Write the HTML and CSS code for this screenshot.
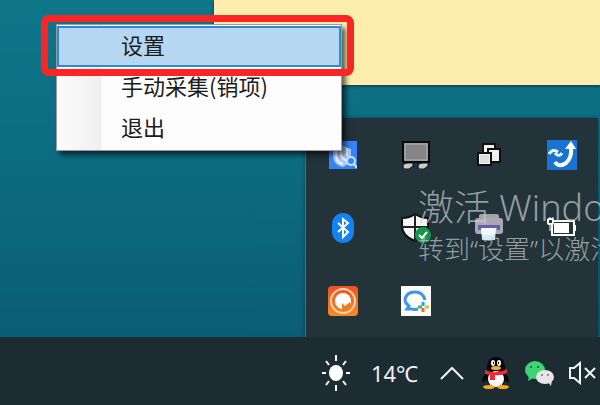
FILE: index.html
```
<!DOCTYPE html>
<html lang="zh-CN">
<head>
    <meta charset="UTF-8">
    <title>桌面</title>
    <link rel="stylesheet" href="styles.css">
</head>
<body>

<main class="desktop">
    <div class="note"></div>

    <div class="tray-panel">
        <button class="icon-button" aria-label="搜索">
            <svg width="28" height="28" viewBox="0 0 28 28">
                <rect width="28" height="28" fill="#3683f5"/>
                <path d="M4 8v8q1 8 10 10q7-3 8-9V8q-4-1-9-4q-4 3-9 4z" fill="#a9c9f9"/>
                <path d="M7 8v7q1 7 7 8M12 6v8q2 5 7 6M18 7v8" fill="none" stroke="#f2f8ff" stroke-width="2"/>
                <circle cx="22" cy="20" r="4" fill="#3683f5" stroke="#cfe3ff" stroke-width="2"/>
                <path d="M25 23l3 4" stroke="#dcebff" stroke-width="2"/>
            </svg>
        </button>
        <button class="icon-button" aria-label="显示器">
            <svg width="28" height="28" viewBox="0 0 28 28">
                <rect x="1" y="1" width="26" height="20" fill="#858585" stroke="#080b0c" stroke-width="2"/>
                <path d="M3 19V3h22v16z" fill="none" stroke="#b4b4b4"/>
                <path d="M1 26q0-4 5-4h5v3l-4 3H2zM16 26q0-4 5-4h5v3l-4 3h-5z" fill="#ccc" stroke="#111"/>
            </svg>
        </button>
        <button class="icon-button" aria-label="窗口">
            <svg width="28" height="28" viewBox="0 0 28 28">
                <g fill="#f1f1f1" stroke="#120f10" stroke-width="2">
                    <rect x="8" y="3" width="12" height="12"/>
                    <rect x="13" y="8" width="12" height="13"/>
                    <rect x="3" y="12" width="13" height="12"/>
                </g>
                <rect x="5" y="14" width="9" height="8" fill="#dcdcdc"/>
            </svg>
        </button>
        <button class="icon-button" aria-label="同步">
            <svg width="30" height="30" viewBox="0 0 30 30">
                <rect width="30" height="30" fill="#1874cf"/>
                <path d="M2 14q4-6 9-2M15 13q-3 5-7 0" fill="none" stroke="#e5f5ff" stroke-width="3"/>
                <path d="M8 22q4 6 11 1q6-5 5-15" fill="none" stroke="#fff" stroke-width="4"/>
                <path d="M18 9l6-8 5 8z" fill="#fff"/>
            </svg>
        </button>
        <button class="icon-button" aria-label="蓝牙">
            <svg width="24" height="30" viewBox="0 0 24 30">
                <rect x="1" width="22" height="30" rx="11" fill="#1382f2"/>
                <path d="M7 10l10 9-5 5V6l5 4-10 9" fill="none" stroke="#fff" stroke-width="2"/>
            </svg>
        </button>
        <button class="icon-button" aria-label="安全中心">
            <svg width="30" height="30" viewBox="0 0 30 30">
                <path d="M1 5q8 0 13-4q6 4 13 4v8q0 10-13 15Q1 23 1 13z" fill="#f7f7f7" stroke="#111" stroke-width="2"/>
                <path d="M14 1v27M1 14h26" stroke="#222" stroke-width="2"/>
                <circle cx="22" cy="22" r="8" fill="#14964a"/>
                <path d="M18 22l3 3 5-6" fill="none" stroke="#fff" stroke-width="2"/>
            </svg>
        </button>
        <button class="icon-button" aria-label="打印机">
            <svg width="30" height="30" viewBox="0 0 30 30">
                <rect x="5" y="1" width="20" height="8" rx="2" fill="#a3a2a8"/>
                <rect x="1" y="5" width="28" height="16" rx="3" fill="#aaa8b6"/>
                <path d="M4 12h22v5h-3v-2H7v2H4z" fill="#6661a2"/>
                <path d="M7 15h15l-1 11q-6 3-13 0z" fill="#f4f9ff"/>
                <path d="M8 22h13v5H8z" fill="#d5edf2"/>
            </svg>
        </button>
        <button class="icon-button" aria-label="电池">
            <svg width="30" height="26" viewBox="0 0 30 26">
                <path d="M7 6h20v14H5V10" fill="none" stroke="#fff" stroke-width="2"/>
                <rect x="7" y="8" width="15" height="10" fill="#fff"/>
                <path d="M28 10v6" stroke="#fff" stroke-width="2"/>
                <rect x="1" y="4" width="5" height="5" rx="1" fill="#223339" stroke="#fff" stroke-width="2"/>
                <path d="M3 2v2M6 2v2M3 10v6" stroke="#fff"/>
            </svg>
        </button>
        <button class="icon-button" aria-label="采集工具">
            <svg width="30" height="30" viewBox="0 0 30 30">
                <defs>
                    <linearGradient id="orange" x2="0" y2="1">
                        <stop stop-color="#ee5322"/>
                        <stop offset="1" stop-color="#f78b20"/>
                    </linearGradient>
                </defs>
                <rect width="30" height="30" rx="4" fill="url(#orange)"/>
                <circle cx="15" cy="15" r="12" fill="none" stroke="#ffd3b8" stroke-width="2"/>
                <circle cx="15" cy="15" r="8" fill="#fff"/>
                <path d="M14 24v-7l3 3 5-4v8z" fill="#f47a22"/>
            </svg>
        </button>
        <button class="icon-button" aria-label="企业微信">
            <svg width="30" height="30" viewBox="0 0 30 30">
                <rect width="30" height="30" fill="#fbfcfd"/>
                <path d="M17 23q-4 1-6 0H6l2-3q-4-3-4-6q1-8 10-8q8 0 10 8" fill="none" stroke="#4195e5" stroke-width="3"/>
                <path d="M22 16v4" stroke="#27a5e8" stroke-width="3"/>
                <path d="M28 21h-4" stroke="#f5bd19" stroke-width="3"/>
                <path d="M22 26v-4" stroke="#ed6638" stroke-width="3"/>
                <path d="M17 21h4" stroke="#42b865" stroke-width="3"/>
            </svg>
        </button>
    </div>

    <div class="watermark">
        <div class="watermark-title">激活 Windo</div>
        <div class="watermark-text">转到“设置”以激活</div>
    </div>

    <div class="context-menu">
        <button class="menu-item selected">设置</button>
        <button class="menu-item">手动采集(销项)</button>
        <button class="menu-item">退出</button>
    </div>
    <div class="marker"></div>
</main>

<footer class="taskbar">
    <button class="weather">
        <svg width="30" height="36" viewBox="0 0 30 36">
            <ellipse cx="15" cy="18" rx="7" ry="8" fill="#fff"/>
            <path d="M15 0v6M15 30v6M1 18h4M25 18h4M5 6l3 4M25 6l-3 4M5 30l3-4M25 30l-3-4" stroke="#fff" stroke-width="2"/>
        </svg>
        <span>14℃</span>
    </button>
    <button class="icon-button" aria-label="显示隐藏的图标">
        <svg width="28" height="16" viewBox="0 0 28 16">
            <path d="M1 14L12 3l11 11" fill="none" stroke="#eef1f2" stroke-width="2"/>
        </svg>
    </button>
    <button class="icon-button" aria-label="QQ">
        <svg width="28" height="32" viewBox="0 0 28 32">
            <path d="M5 15q-7 7-4 11l4-4M22 15q7 7 4 11l-4-4" fill="#070809"/>
            <ellipse cx="14" cy="20" rx="10" ry="10" fill="#070809"/>
            <path d="M5 13V9q1-9 9-9t9 9v4z" fill="#070809"/>
            <ellipse cx="14" cy="22" rx="8" ry="8" fill="#fafafa"/>
            <ellipse cx="11" cy="6" rx="2" ry="3" fill="#fff"/>
            <ellipse cx="17" cy="6" rx="2" ry="3" fill="#fff"/>
            <path d="M11 6h1M16 6h1" stroke="#111" stroke-width="2"/>
            <ellipse cx="14" cy="11" rx="5" ry="2" fill="#f9ab24"/>
            <path d="M3 13q11 5 22-1v4q-6 3-12 2v5H8v-5l-5-1z" fill="#ea2939"/>
            <ellipse cx="7" cy="30" rx="6" ry="2" fill="#f9a91d"/>
            <ellipse cx="21" cy="30" rx="6" ry="2" fill="#f9a91d"/>
        </svg>
    </button>
    <button class="icon-button" aria-label="微信">
        <svg width="30" height="26" viewBox="0 0 30 26">
            <path d="M5 16l-1 5 5-3z" fill="#3cd477"/>
            <ellipse cx="11" cy="10" rx="10" ry="9" fill="#3cd477"/>
            <circle cx="7" cy="7" r="1" fill="#14552d"/>
            <circle cx="14" cy="7" r="1" fill="#14552d"/>
            <path d="M24 22l3 4 1-6z" fill="#e6e6e6"/>
            <ellipse cx="21" cy="17" rx="9" ry="7" fill="#e6e6e6"/>
            <circle cx="18" cy="15" r="1" fill="#717171"/>
            <circle cx="24" cy="15" r="1" fill="#717171"/>
        </svg>
    </button>
    <button class="icon-button" aria-label="静音">
        <svg width="30" height="24" viewBox="0 0 30 24">
            <path d="M2 7h4l6-5v20l-6-5H2z" fill="none" stroke="#f2f4f4" stroke-width="2"/>
            <path d="M17 7l10 10M27 7L17 17" stroke="#f2f4f4" stroke-width="2"/>
        </svg>
    </button>
</footer>

</body>
</html>
```
FILE: styles.css
```
body {
    margin: 0;
    height: 100vh;
    display: flex;
    flex-direction: column;
    overflow: hidden;
    background-color: #1d2c32;
    font-family: "Noto Sans", "Noto Sans CJK SC", sans-serif;
}

button {
    margin: 0;
    padding: 0;
    border: 0;
    background: none;
    font-family: inherit;
}

svg {
    display: block;
}

/* 桌面 */
.desktop {
    position: relative;
    flex: 1;
    overflow: hidden;
    background: linear-gradient(#0f768a, #0c6b81 50%, #0a5d75);
}

.note {
    position: absolute;
    top: 0;
    left: 214px;
    right: 0;
    height: 85px;
    background-color: #feeeae;
    box-shadow: 0 1px 3px rgba(0, 30, 40, 0.7);
}

/* 托盘弹出面板 */
.tray-panel {
    position: absolute;
    right: 2px;
    bottom: 0;
    display: grid;
    grid-template-columns: repeat(4, 73px);
    grid-auto-rows: 73px;
    border-left: 1px solid #48737d;
    background-color: #223339;
    box-shadow: 0 0 4px rgba(0, 30, 40, 0.5);
}

.icon-button {
    display: flex;
    align-items: center;
    justify-content: center;
}

/* 激活水印 */
.watermark {
    position: absolute;
    top: 188px;
    left: 418px;
    color: rgba(200, 206, 208, 0.7);
    font-weight: 300;
    white-space: nowrap;
    pointer-events: none;
}

.watermark-title {
    font-size: 36px;
    line-height: 40px;
}

.watermark-text {
    font-size: 26px;
    line-height: 42px;
}

/* 右键菜单 */
.context-menu {
    position: absolute;
    top: 24px;
    left: 56px;
    width: 284px;
    padding: 1px 0;
    border: 1px solid #9b9b9b;
    background: linear-gradient(to right, #fcfcfc, #efefef 44px, #fdfdfd 45px);
    box-shadow: 4px 4px 5px rgba(0, 0, 0, 0.6);
}

.menu-item {
    display: block;
    box-sizing: border-box;
    width: 100%;
    height: 41px;
    padding: 0 0 6px 64px;
    color: #1c1c1c;
    font-family: "Noto Sans CJK SC", sans-serif;
    font-size: 22px;
    line-height: 32px;
    text-align: left;
}

.menu-item.selected {
    padding-left: 62px;
    border: 2px solid #2d89d9;
    background-color: #b5d7f1;
}

/* 红色标注框 */
.marker {
    position: absolute;
    top: 15px;
    left: 41px;
    box-sizing: border-box;
    width: 313px;
    height: 61px;
    border: 7px solid #fc2525;
    border-radius: 8px;
    pointer-events: none;
}

/* 任务栏 */
.taskbar {
    display: flex;
    align-items: center;
    justify-content: flex-end;
    gap: 14px;
    height: 68px;
    padding: 4px 2px 0 0;
    box-sizing: border-box;
    background-color: #1d2c32;
}

.weather {
    display: flex;
    align-items: center;
    gap: 20px;
    margin-right: 8px;
    color: #eef1f2;
    font-size: 22px;
    line-height: 32px;
}
```
